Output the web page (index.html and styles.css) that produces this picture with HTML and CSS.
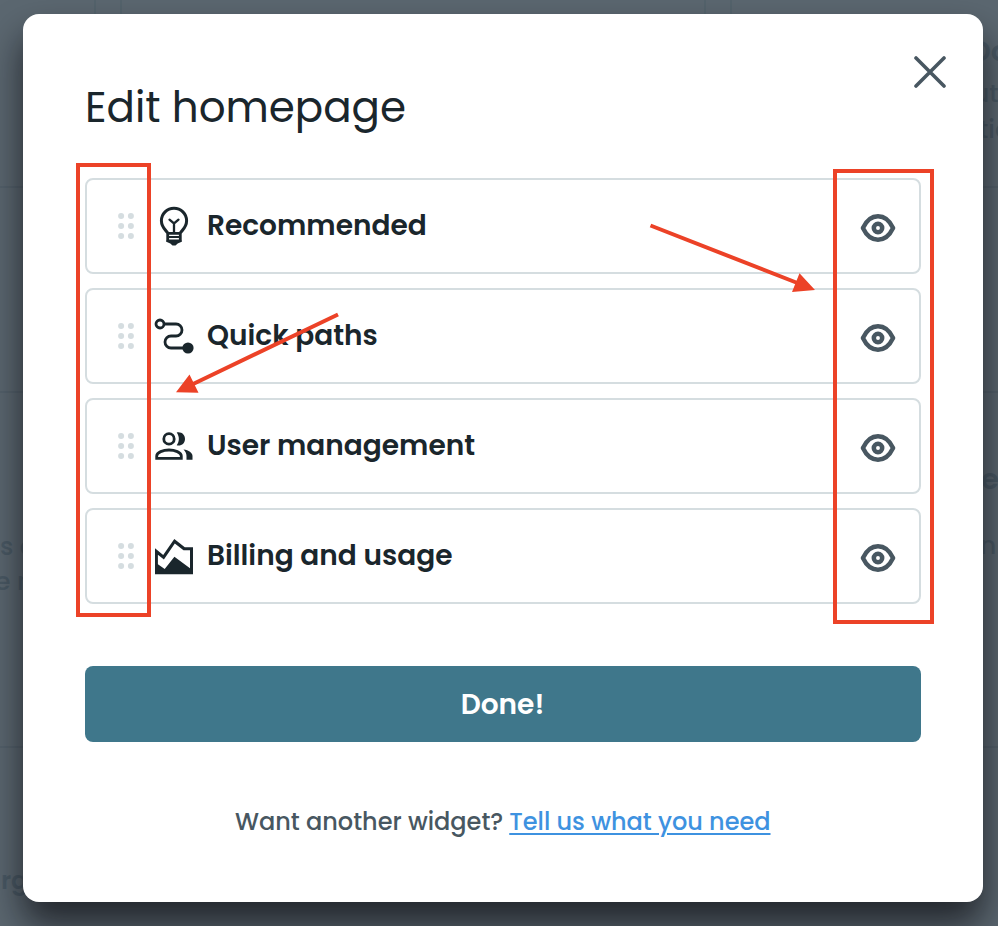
FILE: index.html
```html
<!DOCTYPE html>
<html lang="en">
<head>
<meta charset="utf-8">
<title>Edit homepage</title>
<link rel="stylesheet" href="styles.css">
</head>
<body>
<svg class="defs" width="0" height="0" aria-hidden="true">
  <symbol id="grip" viewBox="0 0 16 26"><g fill="#d5dde0"><circle cx="3.1" cy="3" r="3"/><circle cx="12.9" cy="3" r="3"/><circle cx="3.1" cy="13" r="3"/><circle cx="12.9" cy="13" r="3"/><circle cx="3.1" cy="23" r="3"/><circle cx="12.9" cy="23" r="3"/></g></symbol>
  <symbol id="eye" viewBox="0 0 36 30"><g fill="none" stroke="#485761"><path stroke-width="4.4" stroke-linejoin="round" d="M2.9 15C6 8.500 11.500 3.300 18 3.300S30 8.500 33.100 15C30 21.500 24.500 26.700 18 26.700S6 21.500 2.900 15Z"/><circle cx="18" cy="15" r="4.200" stroke-width="4.500"/></g></symbol>
</svg>
<div class="backdrop" aria-hidden="true">
  <i class="line l1"></i><i class="line l2"></i><i class="line l3"></i><i class="vline v1"></i><i class="vline v2"></i><i class="vline v3"></i><i class="vline v4"></i>
  <span class="ghost g1">Do</span><span class="ghost g2">ute</span><span class="ghost g3">tio</span>
  <span class="ghost g4">e</span><span class="ghost g5">n</span>
  <span class="ghost g6">s o</span><span class="ghost g7">e n</span><span class="ghost g8">rg</span>
</div>
<main class="modal">
  <button class="close" aria-label="Close"><svg width="32" height="32" viewBox="0 0 32 32"><path d="M2 2 30 30M30 2 2 30" stroke="#485761" stroke-width="3.600" stroke-linecap="round"/></svg></button>
  <h1 class="title">Edit homepage</h1>
  <ul class="list">
    <li class="row"><svg class="grip"><use href="#grip"/></svg>
      <svg class="icon" viewBox="0 0 40 40"><g fill="none" stroke="#1a262c"><path stroke-width="3" d="M13.700 27.500C13.500 25 7.400 22.500 7.400 14.800a12.600 12.600 0 0 1 25.200 0C32.600 22.500 26.500 25 26.300 27.500"/><path stroke-width="2.300" stroke-linecap="round" d="M15.500 13.700l4.500 3.800 4.500-3.800M20 17.500v9"/><path stroke-width="2.800" d="M13.700 26.500v9M26.300 26.500v9M12.400 27.300h15.200"/><path stroke-width="1.900" d="M14 31h12M14 34.500h12"/></g><path fill="#1a262c" d="M12.300 34.500h15.400v1.300l-4 1.700-2.200 2h-3l-2.200-2-4-1.700z"/></svg>
      <span class="label">Recommended</span><svg class="eye"><use href="#eye"/></svg></li>
    <li class="row"><svg class="grip"><use href="#grip"/></svg>
      <svg class="icon" viewBox="0 0 40 40"><g fill="none" stroke="#1a262c" stroke-width="2.800"><circle cx="6" cy="8" r="4"/><path d="M10 8h12a6 6 0 0 1 0 12h-5a6 6 0 0 0 0 12h17"/></g><circle cx="34" cy="32" r="5.600" fill="#1a262c"/></svg>
      <span class="label">Quick paths</span><svg class="eye"><use href="#eye"/></svg></li>
    <li class="row"><svg class="grip"><use href="#grip"/></svg>
      <svg class="icon" viewBox="0 0 40 40"><g fill="none" stroke="#1a262c" stroke-width="2.800"><circle cx="15" cy="12.900" r="5.200"/><path d="M2.700 32.400V30c0-3.700 6.500-6 12.300-6s12.300 2.300 12.300 6v2.400z"/></g><path fill="#1a262c" d="M22.700 6.500c4.800-1 8.300 2.200 8.300 6.400s-3.500 7.400-8.300 6.400c2.900-4.100 2.900-8.700 0-12.800zM29.500 23.400c5.200.8 9 3 9 6.600v3.800h-6V30c0-2.600-1.100-4.800-3-6.600z"/></svg>
      <span class="label">User management</span><svg class="eye"><use href="#eye"/></svg></li>
    <li class="row"><svg class="grip"><use href="#grip"/></svg>
      <svg class="icon" viewBox="0 0 40 40"><path fill="#1a262c" fill-rule="evenodd" d="M1 12.300 9.200 19 20.300 3 30.800 11.300H39V38.300H1zM3.900 18.700v9.600l6.800 4.700L20.400 20.700 36 32.300V14.300h-6.500l-8.700-6.800L9.900 23.400z"/></svg>
      <span class="label">Billing and usage</span><svg class="eye"><use href="#eye"/></svg></li>
  </ul>
  <button class="done">Done!</button>
  <p class="foot"><span class="ask">Want another widget?</span><a href="#" class="link">Tell us what you need</a></p>
</main>
<svg class="notes" width="998" height="926" aria-hidden="true">
  <g fill="none" stroke="#ec4227" stroke-width="4"><rect x="78" y="165" width="71" height="450"/><rect x="835" y="171" width="97" height="451"/><path d="M650.500 225.500 800 284M338 314.500 190 385.500"/></g>
  <path fill="#ec4227" d="M815 290 799.500 273.300 792 292zM176 392.300 189.500 374.500 198.500 392.800z"/>
</svg>
</body>
</html>
```
FILE: styles.css
```css
* { box-sizing: border-box; }
body { margin: 0; width: 998px; height: 926px; overflow: hidden; background: #5b6770; font-family: Poppins, Inter, sans-serif; color: #1a262c; display: flex; justify-content: flex-start; align-items: flex-start; }
.defs { position: absolute; }
.backdrop { position: absolute; inset: 0; overflow: hidden; }
.line { position: absolute; left: 0; width: 998px; height: 2px; background: #54616b; }
.l1 { top: 186px; } .l2 { top: 746px; } .l3 { top: 391px; }
.vline { position: absolute; top: 0; width: 2px; height: 20px; background: #54636c; }
.v1 { left: 94px; } .v2 { left: 120px; } .v3 { left: 704px; } .v4 { left: 730px; }
.ghost { position: absolute; white-space: pre; font-size: 25px; line-height: 30px; font-weight: 500; color: #4a5964; }
.g1 { left: 970px; top: 36px; font-size: 29px; font-weight: 600; }
.g2 { left: 973px; top: 79px; } .g3 { left: 979px; top: 115px; }
.g4 { left: 981px; top: 464px; font-size: 29px; font-weight: 600; } .g5 { left: 980px; top: 531px; }
.g6 { left: 0; top: 532px; } .g7 { left: -5px; top: 567px; } .g8 { left: 1px; top: 866px; font-weight: 600; }
.modal { position: relative; margin: 14px 0 0 23px; width: 960px; height: 888px; padding: 68px 62px 0; background: #fff; border-radius: 16px; box-shadow: 0 22px 36px rgba(8,8,12,.68); }
.close { position: absolute; right: 37px; top: 42px; padding: 0; border: 0; background: none; width: 32px; height: 32px; }
.close svg { display: block; }
.title { margin: 0; height: 52px; font-size: 42px; line-height: 52px; font-weight: 400; white-space: nowrap; }
.list { list-style: none; margin: 44px 0 0; padding: 0; display: grid; gap: 14px; }
.row { height: 96px; border: 2px solid #d5dde0; border-radius: 8px; display: flex; align-items: center; padding: 0 23px 0 31px; }
.grip { width: 16px; height: 26px; flex: none; }
.icon { width: 40px; height: 40px; margin-left: 20px; flex: none; }
.label { margin-left: 13px; font-size: 28px; line-height: 36px; font-weight: 600; white-space: nowrap; }
.eye { width: 36px; height: 30px; margin: 3px 0 0 auto; flex: none; }
.done { display: block; width: 836px; height: 76px; margin: 62px 0 0; padding: 2px 1px 0 0; border: 0; border-radius: 8px; background: #3f778b; color: #fff; font: inherit; font-size: 28px; font-weight: 600; }
.foot { margin: 62px 0 0 150px; display: flex; gap: 6px; font-size: 24px; line-height: 36px; font-weight: 500; color: #485761; white-space: nowrap; }
.link { color: #3e92e0; text-decoration: underline; text-decoration-thickness: 2px; text-underline-offset: 3px; }
.notes { position: absolute; left: 0; top: 0; pointer-events: none; }
```
